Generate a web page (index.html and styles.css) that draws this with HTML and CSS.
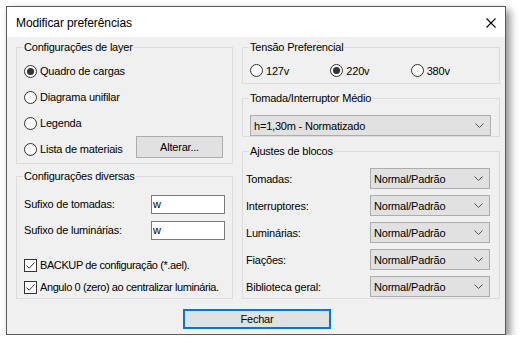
FILE: index.html
```html
<!DOCTYPE html>
<html lang="pt">
<head>
    <meta charset="UTF-8">
    <title>Modificar preferências</title>
    <link rel="stylesheet" href="styles.css">
</head>
<body>
    <div class="window">
        <div class="title_bar">
            <span class="title_text">Modificar preferências</span>
            <svg class="close_icon" width="10" height="10" viewBox="0 0 10 10">
                <path d="M0.5 0.5 L9.5 9.5 M9.5 0.5 L0.5 9.5" stroke="#000" stroke-width="1.1" fill="none"/>
            </svg>
        </div>

        <div class="content">
            <div class="columns">
                <div class="column column_left">
                    <fieldset class="group group_layer">
                        <legend>Configurações de layer</legend>
                        <label class="radio_row">
                            <span class="radio checked"></span>Quadro de cargas
                        </label>
                        <label class="radio_row">
                            <span class="radio"></span>Diagrama unifilar
                        </label>
                        <label class="radio_row">
                            <span class="radio"></span>Legenda
                        </label>
                        <label class="radio_row">
                            <span class="radio"></span>Lista de materiais
                            <span class="button alterar_button">Alterar...</span>
                        </label>
                    </fieldset>

                    <fieldset class="group group_misc">
                        <legend>Configurações diversas</legend>
                        <div class="field_row">
                            <span class="field_label">Sufixo de tomadas:</span>
                            <input class="text_input" type="text" value="w">
                        </div>
                        <div class="field_row">
                            <span class="field_label">Sufixo de luminárias:</span>
                            <input class="text_input" type="text" value="w">
                        </div>
                        <div class="check_list">
                            <label class="check_row">
                                <span class="checkbox">
                                    <svg width="11" height="11" viewBox="0 0 11 11"><path d="M1.5 5.5 L4.2 8.2 L9.5 2.5" stroke="#333" stroke-width="1" fill="none"/></svg>
                                </span>BACKUP de configuração (*.ael).
                            </label>
                            <label class="check_row">
                                <span class="checkbox">
                                    <svg width="11" height="11" viewBox="0 0 11 11"><path d="M1.5 5.5 L4.2 8.2 L9.5 2.5" stroke="#333" stroke-width="1" fill="none"/></svg>
                                </span>Angulo 0 (zero) ao centralizar luminária.
                            </label>
                        </div>
                    </fieldset>
                </div>

                <div class="column column_right">
                    <fieldset class="group group_tensao">
                        <legend>Tensão Preferencial</legend>
                        <div class="tensao_row">
                            <label class="radio_inline"><span class="radio"></span>127v</label>
                            <label class="radio_inline"><span class="radio checked"></span>220v</label>
                            <label class="radio_inline"><span class="radio"></span>380v</label>
                        </div>
                    </fieldset>

                    <fieldset class="group group_tomada">
                        <legend>Tomada/Interruptor Médio</legend>
                        <div class="combo combo_wide">
                            <span>h=1,30m - Normatizado</span>
                            <svg class="chevron" width="9" height="5" viewBox="0 0 9 5"><path d="M0.5 0.5 L4.5 4.5 L8.5 0.5" stroke="#555" stroke-width="1" fill="none"/></svg>
                        </div>
                    </fieldset>

                    <fieldset class="group group_blocos">
                        <legend>Ajustes de blocos</legend>
                        <div class="block_row">
                            <span class="block_label">Tomadas:</span>
                            <div class="combo"><span>Normal/Padrão</span><svg class="chevron" width="9" height="5" viewBox="0 0 9 5"><path d="M0.5 0.5 L4.5 4.5 L8.5 0.5" stroke="#555" stroke-width="1" fill="none"/></svg></div>
                        </div>
                        <div class="block_row">
                            <span class="block_label">Interruptores:</span>
                            <div class="combo"><span>Normal/Padrão</span><svg class="chevron" width="9" height="5" viewBox="0 0 9 5"><path d="M0.5 0.5 L4.5 4.5 L8.5 0.5" stroke="#555" stroke-width="1" fill="none"/></svg></div>
                        </div>
                        <div class="block_row">
                            <span class="block_label">Luminárias:</span>
                            <div class="combo"><span>Normal/Padrão</span><svg class="chevron" width="9" height="5" viewBox="0 0 9 5"><path d="M0.5 0.5 L4.5 4.5 L8.5 0.5" stroke="#555" stroke-width="1" fill="none"/></svg></div>
                        </div>
                        <div class="block_row">
                            <span class="block_label">Fiações:</span>
                            <div class="combo"><span>Normal/Padrão</span><svg class="chevron" width="9" height="5" viewBox="0 0 9 5"><path d="M0.5 0.5 L4.5 4.5 L8.5 0.5" stroke="#555" stroke-width="1" fill="none"/></svg></div>
                        </div>
                        <div class="block_row">
                            <span class="block_label">Biblioteca geral:</span>
                            <div class="combo"><span>Normal/Padrão</span><svg class="chevron" width="9" height="5" viewBox="0 0 9 5"><path d="M0.5 0.5 L4.5 4.5 L8.5 0.5" stroke="#555" stroke-width="1" fill="none"/></svg></div>
                        </div>
                    </fieldset>
                </div>
            </div>

            <div class="footer_row">
                <span class="button fechar_button">Fechar</span>
            </div>
        </div>
    </div>
</body>
</html>
```

FILE: styles.css
```css
/* General */
*{
    font-family: "Liberation Sans", Arial, sans-serif;
    box-sizing: border-box;
}
html{
    padding: 0px;
    margin: 0px;
}
body{
    margin: 0px;
    padding: 6px 0px 0px 6px;
    background-color: white;
    font-size: 11px;
    color: black;
}

/* Window */
.window{
    width: 500px;
    height: 329px;
    border: 1px solid #5b5b5b;
    background-color: #f0f0f0;
    box-shadow: 4px 4px 8px rgba(0, 0, 0, 0.45);
    display: flex;
    flex-direction: column;
}
.title_bar{
    height: 30px;
    flex-shrink: 0;
    background-color: white;
    display: flex;
    align-items: center;
    justify-content: space-between;
    padding: 0px 9px 0px 9px;
}
.title_text{
    font-size: 12px;
    letter-spacing: -0.1px;
    padding-top: 1px;
}
.close_icon{
    margin-top: 1px;
}
.content{
    padding: 4px 5px 0px 9px;
    display: flex;
    flex-direction: column;
}
.columns{
    display: flex;
    gap: 9px;
}
.column{
    display: flex;
    flex-direction: column;
}
.column_left{
    width: 217px;
    gap: 6px;
}
.column_right{
    width: 258px;
    gap: 8px;
}

/* Groups */
.group{
    margin: 0px;
    border: 1px solid #dcdcdc;
    padding: 0px 8px 0px 7px;
    min-width: 0px;
}
.group legend{
    padding: 0px 1px;
    margin-left: -1px;
    line-height: 13px;
    font-size: 11px;
    letter-spacing: -0.2px;
}
.group_layer{
    height: 123px;
    padding-top: 4px;
}
.group_misc{
    height: 129px;
    padding-top: 8px;
    padding-right: 2px;
}
.group_tensao{
    height: 43px;
    padding-top: 5px;
}
.group_tomada{
    height: 45px;
    padding-top: 10px;
}
.group_blocos{
    height: 154px;
    padding-top: 10px;
    padding-left: 3px;
}
.group_blocos legend{
    margin-left: 3px;
}

/* Radios */
.radio{
    width: 13px;
    height: 13px;
    border: 1px solid #333333;
    border-radius: 50%;
    background-color: white;
    display: flex;
    align-items: center;
    justify-content: center;
    margin-right: 3px;
    flex-shrink: 0;
}
.radio.checked::after{
    content: "";
    width: 7px;
    height: 7px;
    border-radius: 50%;
    background-color: #333333;
}
.radio_row{
    height: 26px;
    display: flex;
    align-items: center;
    letter-spacing: -0.2px;
}
.tensao_row{
    display: flex;
    height: 23px;
    align-items: center;
}
.radio_inline{
    width: 82px;
    display: flex;
    align-items: center;
    letter-spacing: -0.2px;
}

/* Buttons */
.button{
    background-color: #e1e1e1;
    border: 1px solid #adadad;
    display: flex;
    align-items: center;
    justify-content: center;
    letter-spacing: -0.2px;
}
.alterar_button{
    width: 87px;
    height: 22px;
    margin-left: auto;
    margin-right: 1px;
    margin-top: -4px;
}
.footer_row{
    display: flex;
    justify-content: center;
    padding-top: 10px;
    padding-right: 2px;
}
.fechar_button{
    width: 148px;
    height: 20px;
    border: 2px solid #0078d7;
}

/* Fields */
.field_row{
    height: 26px;
    display: flex;
    align-items: center;
}
.field_label{
    width: 127px;
    letter-spacing: -0.2px;
}
.text_input{
    width: 74px;
    height: 19px;
    border: 1px solid #7a7a7a;
    background-color: white;
    font-size: 11px;
    padding: 0px 1px;
    margin: 0px;
    outline: none;
}
.check_list{
    margin-top: 11px;
    display: flex;
    flex-direction: column;
}
.check_row{
    height: 22px;
    display: flex;
    align-items: center;
    white-space: nowrap;
    letter-spacing: -0.4px;
}
.checkbox{
    width: 13px;
    height: 13px;
    border: 1px solid #333333;
    background-color: white;
    display: flex;
    align-items: center;
    justify-content: center;
    margin-right: 3px;
    flex-shrink: 0;
}

/* Combos */
.combo{
    width: 120px;
    height: 21px;
    background-color: #e1e1e1;
    border: 1px solid #adadad;
    display: flex;
    align-items: center;
    justify-content: space-between;
    padding: 0px 6px 0px 3px;
    letter-spacing: -0.2px;
}
.combo_wide{
    width: 100%;
}
.block_row{
    display: flex;
    align-items: center;
    height: 21px;
    margin-bottom: 6px;
}
.block_row:last-child{
    margin-bottom: 0px;
}
.block_label{
    width: 124px;
    letter-spacing: -0.2px;
}
```
